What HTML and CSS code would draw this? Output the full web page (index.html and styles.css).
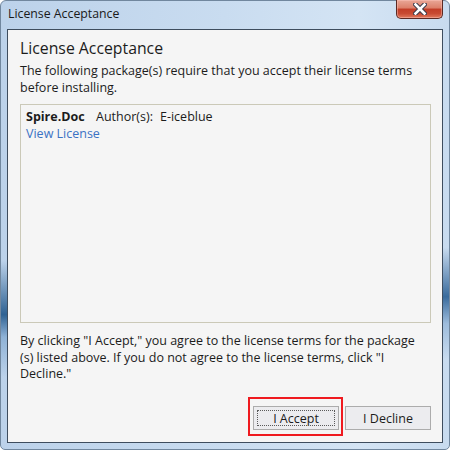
FILE: index.html
```html
<!DOCTYPE html>
<html>
<head>
<meta charset="utf-8">
<link rel="stylesheet" href="styles.css">
</head>
<body>
<div class="window">
  <div class="titlebar">
    <span class="title">License Acceptance</span>
    <div class="close">
      <svg width="14" height="12" viewBox="0 0 14 12">
        <path d="M2.5 1.5 L11.5 10.5 M11.5 1.5 L2.5 10.5" stroke="#3b3b4a" stroke-width="4.6" stroke-linecap="square" fill="none"/>
        <path d="M2.5 1.5 L11.5 10.5 M11.5 1.5 L2.5 10.5" stroke="#ffffff" stroke-width="2.6" stroke-linecap="square" fill="none"/>
      </svg>
    </div>
  </div>
  <div class="frame">
    <div class="client">
      <h1 class="heading">License Acceptance</h1>
      <p class="intro">The following package(s) require that you accept their license terms before installing.</p>
      <div class="list">
        <div class="pkg"><span class="name">Spire.Doc</span><span class="author">Author(s):</span><span>E-iceblue</span></div>
        <a class="link">View License</a>
      </div>
      <p class="notice">By clicking "I Accept," you agree to the license terms for the package<wbr>(s) listed above. If you do not agree to the license terms, click "I Decline."</p>
      <div class="buttons">
        <div class="mark"><button class="btn accept">I Accept</button></div>
        <button class="btn">I Decline</button>
      </div>
    </div>
  </div>
</div>
</body>
</html>
```

FILE: styles.css
```css
* { box-sizing: border-box; }
html, body { margin: 0; padding: 0; background: #ffffff; }
body { width: 450px; height: 450px; overflow: hidden; font-family: "Open Sans", "Noto Sans", sans-serif; }

.window {
  width: 450px;
  height: 450px;
  display: flex;
  flex-direction: column;
  border-radius: 6px 6px 5px 5px;
  border: 1px solid #71879e;
  background:
    linear-gradient(to bottom, rgba(255,255,255,0) 58%, #2f6293 70%, #8fb2d6 75%, rgba(255,255,255,0) 84%) no-repeat 0 0 / 6px 100%,
    linear-gradient(to bottom, rgba(255,255,255,0) 55%, #3a6b9c 66%, #9dbcdc 72%, rgba(255,255,255,0) 80%) no-repeat 100% 0 / 6px 100%,
    linear-gradient(to right, #bcd2ea 0%, #c9dcf0 50%, #d4e4f4 80%, #c8dbef 100%);
}

.titlebar {
  height: 28px;
  display: flex;
  justify-content: space-between;
  align-items: flex-start;
  padding-left: 7px;
  padding-right: 6px;
}
.title {
  font-size: 12.3px;
  line-height: 12px;
  margin-top: 6.5px;
  color: #1a1a1a;
}
.close {
  width: 47px;
  height: 19px;
  margin-top: -1px;
  border: 1px solid #5b2a24;
  border-top: none;
  border-radius: 0 0 5px 5px;
  background: linear-gradient(to bottom, #e9a797 0%, #dc7f69 45%, #c23d27 50%, #c84a32 75%, #e0795d 100%);
  box-shadow: inset 0 0 0 1px rgba(255,200,190,0.45);
  display: flex;
  align-items: center;
  justify-content: center;
}
.close svg { display: block; margin-left: 1px; }

.frame {
  flex: 1;
  padding: 0 6px 6px 6px;
  display: flex;
}
.client {
  flex: 1;
  border: 1px solid #3e4d5e;
  background: #f5f5f5;
  padding: 8px 11px 12px 12px;
  display: flex;
  flex-direction: column;
  color: #1c1c1c;
  font-size: 12.5px;
  line-height: 16.5px;
}

.heading {
  margin: 0;
  font-weight: normal;
  font-size: 15.8px;
  line-height: 20px;
  color: #1c1c1c;
}
.intro { margin: 5px 0 0 0; }

.list {
  margin-top: 8px;
  height: 219px;
  border: 1px solid #cbc9b8;
  padding: 3px 5px 0 5px;
  line-height: 17px;
}
.pkg { display: flex; }
.name { font-weight: bold; width: 70px; }
.author { width: 64px; }
.link { display: block; color: #3a72c4; text-decoration: none; }

.notice { margin: 10px 6px 0 0; }

.buttons {
  margin-top: auto;
  display: flex;
  justify-content: flex-end;
  gap: 6px;
}
.mark {
  margin: -9px -4px -6px -5px;
  padding: 7px 2px 4px 3px;
  border: 2px solid #ef1a1f;
  display: flex;
}
.btn {
  width: 86px;
  height: 24px;
  margin: 0;
  padding: 0;
  border: 1px solid #acacac;
  background: #ececef;
  font-family: inherit;
  font-size: 12.5px;
  color: #1c1c1c;
  position: relative;
}
.accept::after {
  content: "";
  position: absolute;
  left: 3px; right: 3px; top: 3px; bottom: 3px;
  border: 1px dotted #5a5a5a;
}
```
